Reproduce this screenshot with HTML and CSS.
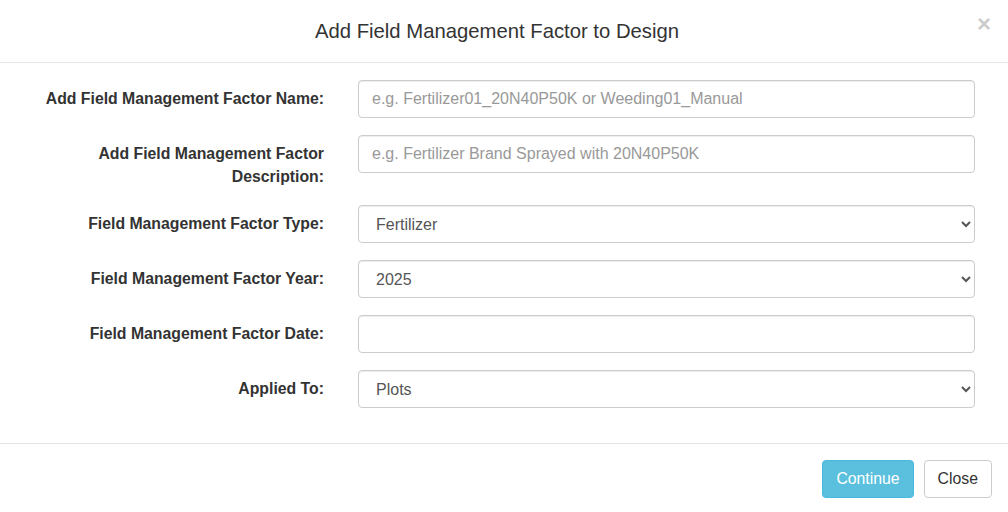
FILE: index.html
```html
<!DOCTYPE html>
<html>
<head>
<meta charset="utf-8">
<link rel="stylesheet" href="styles.css">
</head>
<body>
<div class="modal">
  <div class="modal-header">
    <h4 class="modal-title">Add Field Management Factor to Design</h4>
    <button class="close" type="button">&times;</button>
  </div>
  <div class="modal-body">
    <div class="form-row">
      <label class="form-label">Add Field Management Factor Name:</label>
      <input class="form-control" type="text" placeholder="e.g. Fertilizer01_20N40P50K or Weeding01_Manual">
    </div>
    <div class="form-row">
      <label class="form-label">Add Field Management Factor Description:</label>
      <input class="form-control" type="text" placeholder="e.g. Fertilizer Brand Sprayed with 20N40P50K">
    </div>
    <div class="form-row">
      <label class="form-label">Field Management Factor Type:</label>
      <select class="form-control"><option>Fertilizer</option></select>
    </div>
    <div class="form-row">
      <label class="form-label">Field Management Factor Year:</label>
      <select class="form-control"><option>2025</option></select>
    </div>
    <div class="form-row">
      <label class="form-label">Field Management Factor Date:</label>
      <input class="form-control" type="text">
    </div>
    <div class="form-row">
      <label class="form-label">Applied To:</label>
      <select class="form-control"><option>Plots</option></select>
    </div>
  </div>
  <div class="modal-footer">
    <button class="btn btn-info" type="button">Continue</button>
    <button class="btn btn-default" type="button">Close</button>
  </div>
</div>
</body>
</html>
```
FILE: styles.css
```css
* { box-sizing: border-box; }
html, body { margin: 0; padding: 0; background: #fff; }
body {
  font-family: "Liberation Sans", Arial, sans-serif;
  font-size: 16px;
  line-height: 1.42857;
  color: #333;
}
.modal { width: 1008px; background: #fff; }
.modal-header {
  display: flex;
  align-items: flex-start;
  padding: 17px;
  border-bottom: 1px solid #e5e5e5;
}
.modal-title {
  flex: 1;
  margin: 0;
  text-align: center;
  font-size: 20.3px;
  font-weight: normal;
  line-height: 28px;
  color: #333;
}
.close {
  margin-top: -5px;
  padding: 0;
  border: 0;
  background: transparent;
  font-family: "Liberation Sans", Arial, sans-serif;
  font-size: 24px;
  font-weight: bold;
  line-height: 1;
  color: #000;
  opacity: 0.2;
}
.modal-body { padding: 17px 33px 18px 17px; }
.form-row {
  display: grid;
  grid-template-columns: 307px 1fr;
  column-gap: 34px;
  margin-bottom: 17px;
}
.form-row:last-child { margin-bottom: 0; }
.form-label {
  padding-top: 7px;
  text-align: right;
  font-weight: bold;
  font-size: 15.8px;
  line-height: 23px;
}
.form-control {
  display: block;
  width: 100%;
  height: 38px;
  padding: 7px 13px;
  font-family: "Liberation Sans", Arial, sans-serif;
  font-size: 16px;
  color: #555;
  background: #fff;
  border: 1px solid #ccc;
  border-radius: 4px;
  box-shadow: inset 0 1px 1px rgba(0,0,0,.075);
}
.form-control::placeholder { color: #999; }
.modal-footer {
  margin-top: 17px;
  padding: 16px 16px 17px;
  border-top: 1px solid #e5e5e5;
  display: flex;
  justify-content: flex-end;
  gap: 10px;
}
.btn {
  height: 38px;
  padding: 7px 13px;
  font-family: "Liberation Sans", Arial, sans-serif;
  font-size: 15.8px;
  line-height: 22px;
  border: 1px solid transparent;
  border-radius: 4px;
}
.btn-info { background: #5bc0de; border-color: #46b8da; color: #fff; }
.btn-default { background: #fff; border-color: #ccc; color: #333; }
```
